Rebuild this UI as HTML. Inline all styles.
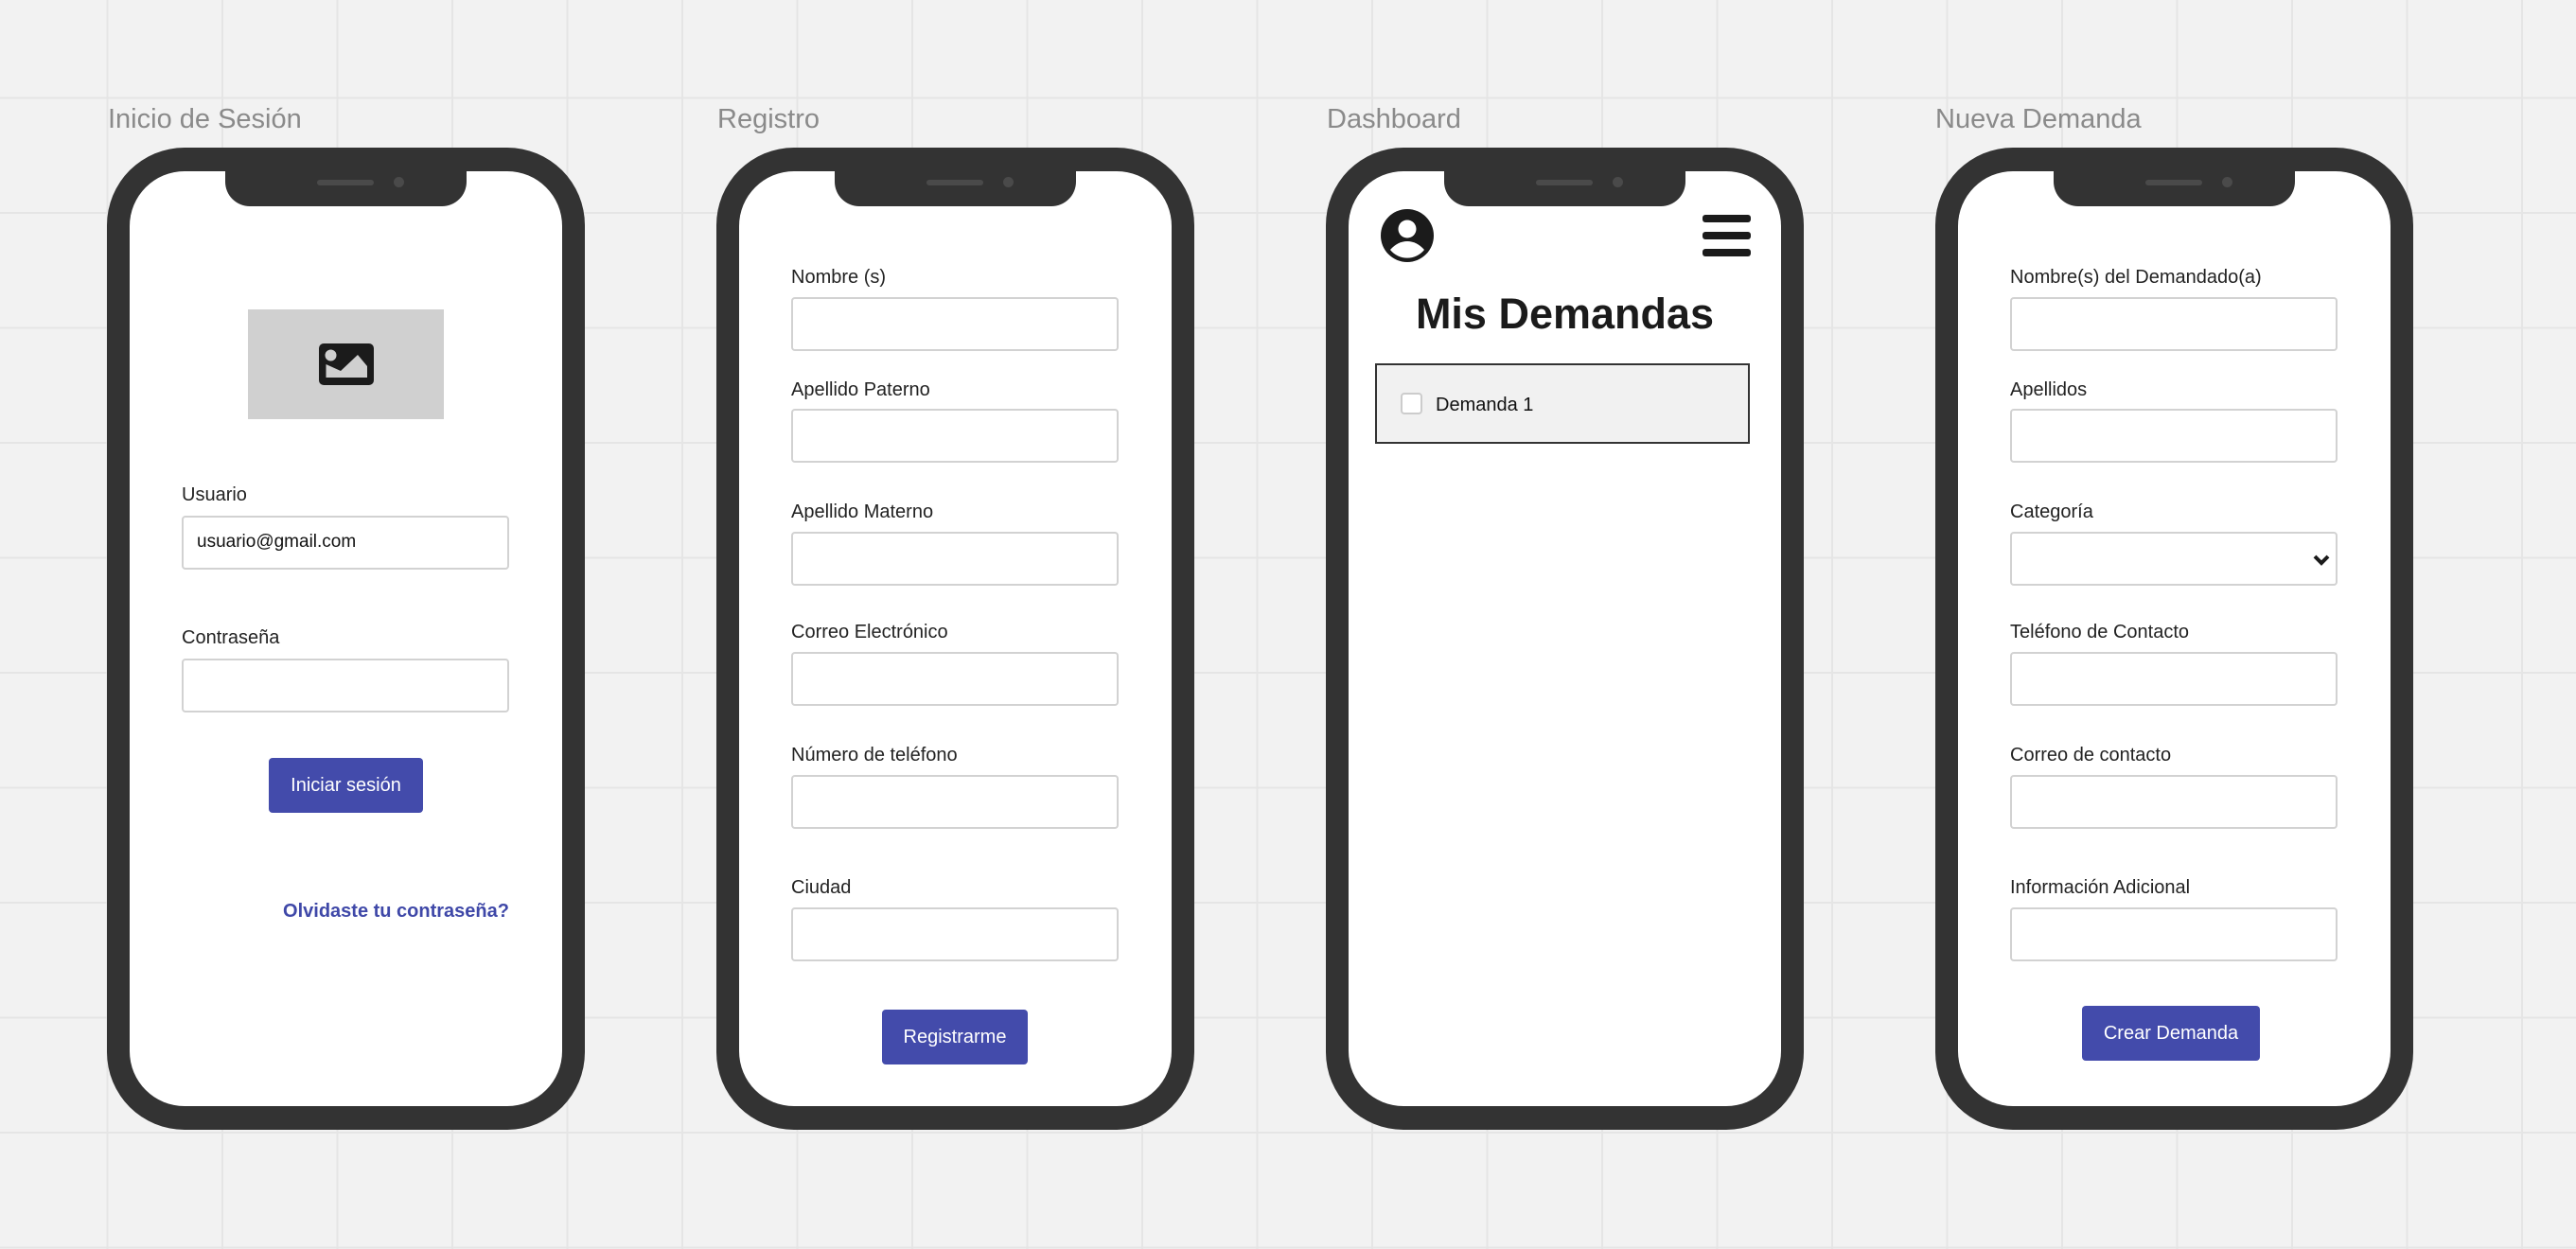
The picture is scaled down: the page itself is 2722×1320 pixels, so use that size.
<!DOCTYPE html>
<html><head><meta charset="utf-8"><style>
*{margin:0;padding:0;box-sizing:border-box}
body{width:2722px;height:1320px;overflow:hidden;position:relative;font-family:"Liberation Sans",Arial,sans-serif;
background-color:#f2f2f2;
background-image:linear-gradient(to right,#e5e5e5 2px,transparent 2px),linear-gradient(to bottom,#e5e5e5 2px,transparent 2px);
background-size:121.5px 121.5px;background-position:-9px -19px}
.title{position:absolute;top:110px;font-size:29px;color:#8a8a8a}
.phone{position:absolute;top:156px;width:505px;height:1038px;background:#333;border-radius:82px}
.screen{position:absolute;left:24px;right:24px;top:25px;bottom:25px;background:#fff;border-radius:58px;overflow:hidden}
.notch{position:absolute;left:125px;top:0;width:255px;height:62px;background:#333;border-radius:0 0 26px 26px}
.spk{position:absolute;left:222px;top:34px;width:60px;height:6px;border-radius:3px;background:#4a4a4a}
.cam{position:absolute;left:303px;top:31px;width:11px;height:11px;border-radius:50%;background:#4a4a4a}
.lbl{position:absolute;left:79px;font-size:20px;line-height:24px;color:#222;white-space:nowrap}
.inp{position:absolute;left:79px;width:346px;height:57px;border:2px solid #d2d2d2;border-radius:4px;background:#fff}
.btn{position:absolute;height:58px;background:#434bab;border-radius:4px;color:#fff;font-size:20px;display:flex;align-items:center;justify-content:center}
</style></head><body>

<div class="title" style="left:114px">Inicio de Sesión</div>
<div class="title" style="left:758px">Registro</div>
<div class="title" style="left:1402px">Dashboard</div>
<div class="title" style="left:2045px">Nueva Demanda</div>

<!-- Phone 1 -->
<div class="phone" style="left:113px">
<div class="screen"></div><div class="notch"></div><div class="spk"></div><div class="cam"></div>
<div style="position:absolute;left:149px;top:171px;width:207px;height:116px;background:#d0d0d0"></div>
<svg style="position:absolute;left:224px;top:207px" width="58" height="44" viewBox="0 0 58 44">
<rect width="58" height="44" rx="5" fill="#1b1b1b"/>
<circle cx="12.5" cy="12.5" r="6" fill="#d0d0d0"/>
<path d="M7.5 36 V22 L23 29 L41 12 L51 24 V36 Z" fill="#d0d0d0"/>
</svg>
<div class="lbl" style="top:355px">Usuario</div>
<div class="inp" style="top:389px"><span style="position:absolute;left:14px;top:15px;font-size:19px;color:#111">usuario@gmail.com</span></div>
<div class="lbl" style="top:506px">Contraseña</div>
<div class="inp" style="top:540px"></div>
<div class="btn" style="left:171px;top:645px;width:163px">Iniciar sesión</div>
<div style="position:absolute;right:80px;top:796px;font-size:20px;font-weight:bold;color:#3f48a8">Olvidaste tu contraseña?</div>
</div>

<!-- Phone 2 -->
<div class="phone" style="left:757px">
<div class="screen"></div><div class="notch"></div><div class="spk"></div><div class="cam"></div>
<div class="lbl" style="top:125px">Nombre (s)</div><div class="inp" style="top:158px"></div>
<div class="lbl" style="top:244px">Apellido Paterno</div><div class="inp" style="top:276px"></div>
<div class="lbl" style="top:373px">Apellido Materno</div><div class="inp" style="top:406px"></div>
<div class="lbl" style="top:500px">Correo Electrónico</div><div class="inp" style="top:533px"></div>
<div class="lbl" style="top:630px">Número de teléfono</div><div class="inp" style="top:663px"></div>
<div class="lbl" style="top:770px">Ciudad</div><div class="inp" style="top:803px"></div>
<div class="btn" style="left:175px;top:911px;width:154px">Registrarme</div>
</div>

<!-- Phone 3 -->
<div class="phone" style="left:1401px">
<div class="screen"></div><div class="notch"></div><div class="spk"></div><div class="cam"></div>
<svg style="position:absolute;left:58px;top:65px" width="56" height="56" viewBox="-28 -28 56 56">
<circle r="28" fill="#1b1b1b"/>
<circle cx="0" cy="-7" r="9.5" fill="#fff"/>
<path d="M-18 15 Q-10 6 0 6 Q10 6 18 15 A23 23 0 0 1 -18 15Z" fill="#fff"/>
</svg>
<div style="position:absolute;left:398px;top:71px;width:51px;height:8px;border-radius:3px;background:#1b1b1b"></div>
<div style="position:absolute;left:398px;top:89px;width:51px;height:8px;border-radius:3px;background:#1b1b1b"></div>
<div style="position:absolute;left:398px;top:107px;width:51px;height:8px;border-radius:3px;background:#1b1b1b"></div>
<div style="position:absolute;left:0;width:505px;top:150px;text-align:center;font-size:45px;font-weight:bold;color:#1b1b1b">Mis Demandas</div>
<div style="position:absolute;left:52px;top:228px;width:396px;height:85px;border:2px solid #333;background:#f1f1f1"></div>
<div style="position:absolute;left:79px;top:259px;width:23px;height:23px;border:2px solid #ccc;border-radius:4px;background:#fff"></div>
<div style="position:absolute;left:116px;top:261px;font-size:20px;color:#111">Demanda 1</div>
</div>

<!-- Phone 4 -->
<div class="phone" style="left:2045px">
<div class="screen"></div><div class="notch"></div><div class="spk"></div><div class="cam"></div>
<div class="lbl" style="top:125px">Nombre(s) del Demandado(a)</div><div class="inp" style="top:158px"></div>
<div class="lbl" style="top:244px">Apellidos</div><div class="inp" style="top:276px"></div>
<div class="lbl" style="top:373px">Categoría</div><div class="inp" style="top:406px">
<svg style="position:absolute;left:318px;top:22px" width="18" height="12" viewBox="0 0 18 12"><path d="M2 2 L9 9 L16 2" fill="none" stroke="#1b1b1b" stroke-width="4"/></svg></div>
<div class="lbl" style="top:500px">Teléfono de Contacto</div><div class="inp" style="top:533px"></div>
<div class="lbl" style="top:630px">Correo de contacto</div><div class="inp" style="top:663px"></div>
<div class="lbl" style="top:770px">Información Adicional</div><div class="inp" style="top:803px"></div>
<div class="btn" style="left:155px;top:907px;width:188px">Crear Demanda</div>
</div>

</body></html>
